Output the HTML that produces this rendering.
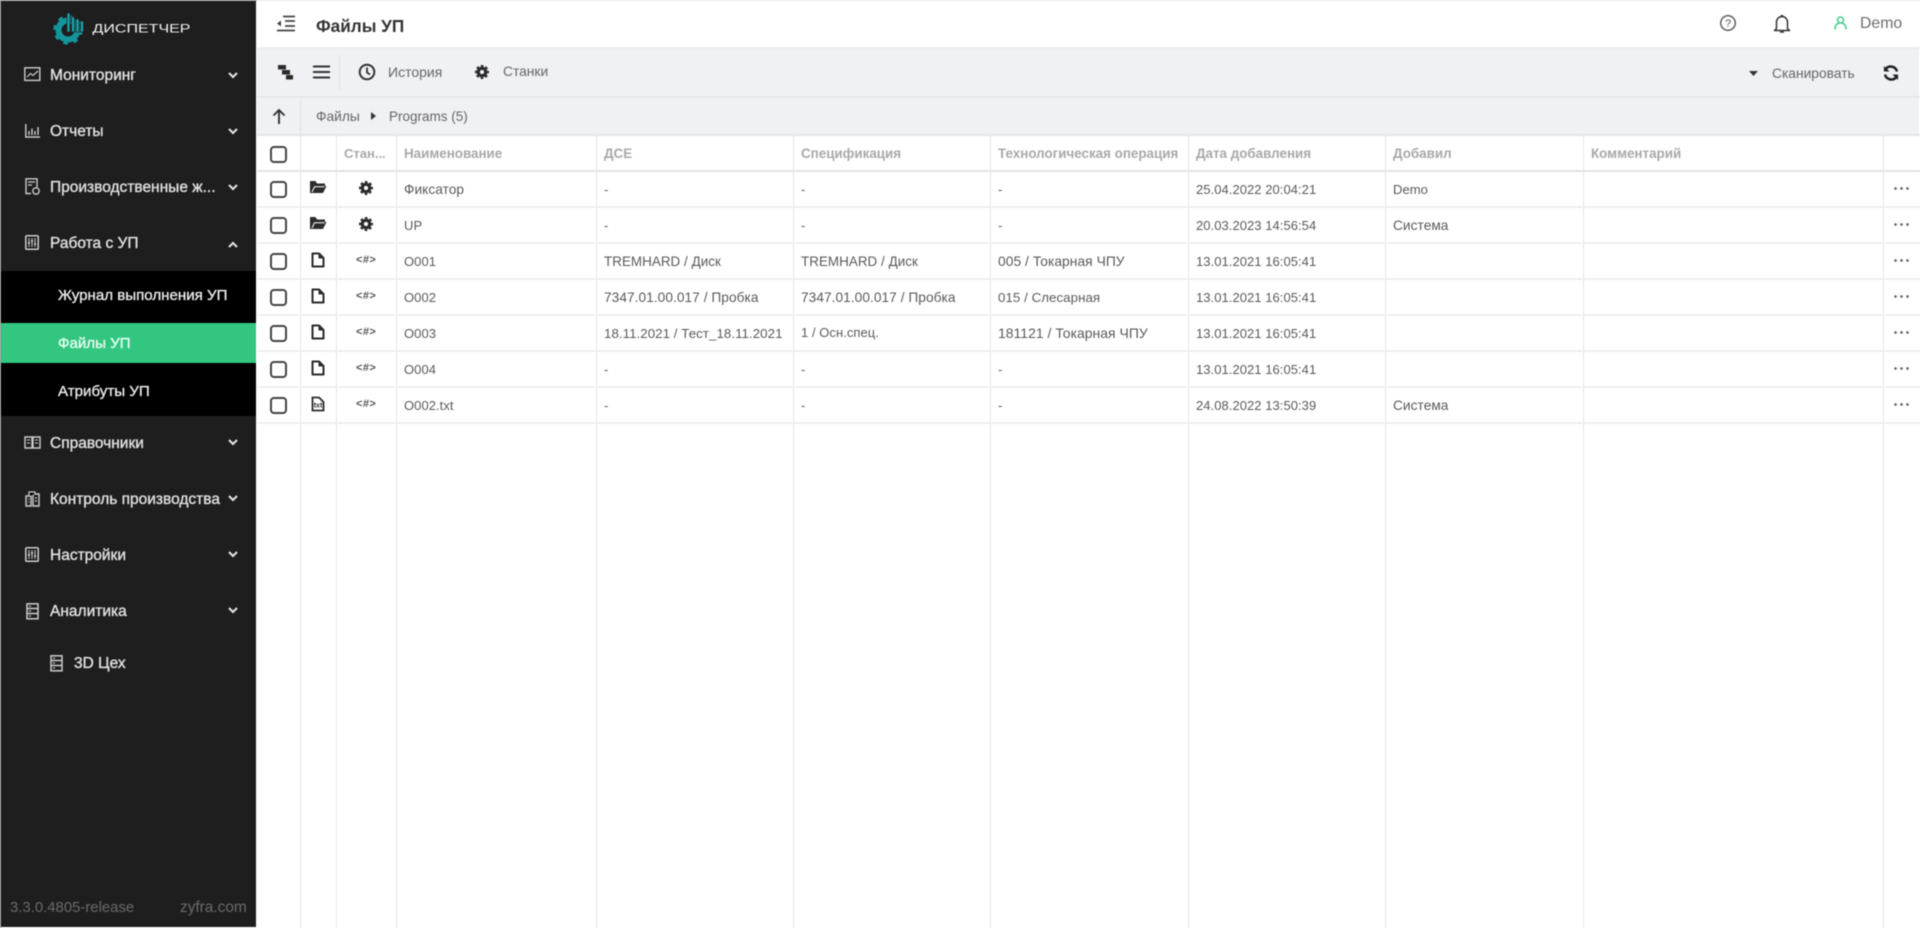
<!DOCTYPE html>
<html lang="ru"><head><meta charset="utf-8"><title>Файлы УП</title>
<style>
html,body{margin:0;padding:0;width:1920px;height:928px;overflow:hidden;background:#fff}
#r{position:relative;width:1920px;height:928px;overflow:hidden;font-family:"Liberation Sans",sans-serif;filter:blur(.4px)}
#r div,#r span,#r svg{position:absolute}
.t{white-space:nowrap;line-height:20px;height:20px}
.m{left:50px;font-size:15.5px;color:#e2e2e2;-webkit-text-stroke:.35px #e2e2e2}
.s{left:58px;font-size:15.1px;color:#e8e8e8;-webkit-text-stroke:.35px #e8e8e8}
.h{top:144px;font-size:13.4px;font-weight:700;color:#a8a8a8}
.c{font-size:13px;color:#5a5a5a;letter-spacing:.05px}
.x{font-size:13.7px}
.b{font-size:14px;color:#666}
.v{left:0;width:1px;top:135px;height:793px;background:#e4e5e8}
.l{left:257px;width:1663px;height:2px;background:#eeeff1}
.cb{left:270px;width:13px;height:13px;border:2px solid #444;border-radius:4px}
.ar{font-size:11px;font-weight:700;color:#555;left:356px;width:20px;text-align:center;letter-spacing:.4px}
.dot{left:1894px;width:16px;height:3px;background:radial-gradient(circle at 1.5px 1.5px,#666 1.2px,transparent 1.5px) 0 0/6px 3px}
</style></head><body><div id="r">
<svg width="0" height="0" style="left:0;top:0"><defs>
<g id="gear"><circle cx="8" cy="8" r="3.7" fill="none" stroke="#2b2b2b" stroke-width="3.2"/><circle cx="8" cy="8" r="5.9" fill="none" stroke="#2b2b2b" stroke-width="2.2" stroke-dasharray="2.7 1.93" stroke-dashoffset="1.35"/></g>
<g id="doc"><path d="M2.5 1.5H9L13.5 6V14.5H2.5Z" fill="none" stroke="#2b2b2b" stroke-width="2" stroke-linejoin="round"/><path d="M8.5 1.5V6.5H13.5Z" fill="#2b2b2b"/></g>
<g id="fold"><path d="M1 2V14H14L17.5 7H16V4.5H8L6.5 2Z" fill="#2b2b2b"/><path d="M3 13L5.5 7.8H15.5" fill="none" stroke="#fff" stroke-width="1"/></g>
<g id="down"><path d="M1 1L5 5L9 1" fill="none" stroke="#ddd" stroke-width="2.2"/></g>
<g id="sl"><rect x=".8" y=".8" width="12.4" height="13.4" fill="none" stroke="#ccc" stroke-width="1.5" rx="1"/><path d="M4 3V12M7 3V12M10 3V12" stroke="#ccc" stroke-width="1"/><path d="M2.8 8H5.2M5.8 6H8.2M8.8 9H11.2" stroke="#ccc" stroke-width="1.3"/></g>
<g id="tb"><rect x="1" y=".8" width="11" height="15" fill="none" stroke="#ccc" stroke-width="1.5"/><path d="M1 5.5H12M1 10.5H12" stroke="#ccc" stroke-width="1.5"/><path d="M3 3.2H5M3 8H5M3 13H5" stroke="#ccc" stroke-width="1.2"/></g>
</defs></svg>

<!-- sidebar -->
<div style="left:0;top:0;width:257px;height:1px;background:#999"></div>
<div style="left:257px;top:0;width:1663px;height:1px;background:#e8e8e8"></div>
<div style="left:1px;top:1px;width:255px;height:926px;background:#1e1e1e"></div>
<div style="left:0;top:0;width:1px;height:928px;background:#888"></div>
<div style="left:1px;top:271px;width:255px;height:145px;background:#000"></div>
<div style="left:1px;top:323px;width:255px;height:40px;background:#33c680"></div>

<svg style="left:53px;top:12px" width="34" height="34" viewBox="0 0 34 34">
<circle cx="15" cy="18" r="9.5" fill="none" stroke="#13959b" stroke-width="6"/>
<circle cx="15" cy="18" r="13" fill="none" stroke="#13959b" stroke-width="3.4" stroke-dasharray="4.5 5.7"/>
<path d="M14 1h3v19h-3zM18.5 5h3v15h-3zM23 7h3v13h-3zM27.5 9h3v11h-3z" fill="#1aa6ad" stroke="#1e1e1e" stroke-width=".8"/></svg>
<svg style="left:90px;top:18px" width="104" height="20"><text x="2.5" y="14.5" font-family="Liberation Sans" font-size="11.5" fill="#f2f2f2" textLength="98" lengthAdjust="spacingAndGlyphs">ДИСПЕТЧЕР</text></svg>

<div class="t m" style="top:66px">Мониторинг</div>
<div class="t m" style="top:122px">Отчеты</div>
<div class="t m" style="top:178px">Производственные ж...</div>
<div class="t m" style="top:234px">Работа с УП</div>
<div class="t s" style="top:286px">Журнал выполнения УП</div>
<div class="t s" style="top:334px;color:#e6fff2;-webkit-text-stroke-color:#e6fff2">Файлы УП</div>
<div class="t s" style="top:382px">Атрибуты УП</div>
<div class="t m" style="top:434px">Справочники</div>
<div class="t m" style="top:490px">Контроль производства</div>
<div class="t m" style="top:546px">Настройки</div>
<div class="t m" style="top:602px">Аналитика</div>
<div class="t m" style="left:74px;top:654px">3D Цех</div>
<div class="t" style="left:10px;top:898px;font-size:14.9px;color:#6a6a6a">3.3.0.4805-release</div>
<div class="t" style="left:180px;top:898px;font-size:15.4px;color:#6a6a6a">zyfra.com</div>

<svg style="left:228px;top:72px" width="10" height="7"><use href="#down"/></svg>
<svg style="left:228px;top:128px" width="10" height="7"><use href="#down"/></svg>
<svg style="left:228px;top:184px" width="10" height="7"><use href="#down"/></svg>
<svg style="left:228px;top:241px" width="10" height="7"><path d="M1 6L5 2L9 6" fill="none" stroke="#ddd" stroke-width="2.2"/></svg>
<svg style="left:228px;top:439px" width="10" height="7"><use href="#down"/></svg>
<svg style="left:228px;top:495px" width="10" height="7"><use href="#down"/></svg>
<svg style="left:228px;top:551px" width="10" height="7"><use href="#down"/></svg>
<svg style="left:228px;top:607px" width="10" height="7"><use href="#down"/></svg>

<svg style="left:24px;top:67px" width="17" height="15"><rect x=".8" y=".8" width="15" height="12.6" fill="none" stroke="#ccc" stroke-width="1.4"/><path d="M3 10L6.5 6.5L9 8.5L14 4" fill="none" stroke="#ccc" stroke-width="1.2"/></svg>
<svg style="left:25px;top:124px" width="15" height="14"><path d="M.8 0V13H15" fill="none" stroke="#ccc" stroke-width="1.4"/><path d="M4 11V7M7 11V4.5M10 11V7M13 11V3" stroke="#ccc" stroke-width="1.4"/></svg>
<svg style="left:25px;top:178px" width="15" height="17"><path d="M6 15.5H1V.8H12V9" fill="none" stroke="#ccc" stroke-width="1.4"/><path d="M3 4H10M3 7H7" stroke="#ccc" stroke-width="1.3"/><circle cx="11" cy="13" r="3.2" fill="none" stroke="#ccc" stroke-width="1.3"/></svg>
<svg style="left:25px;top:235px" width="15" height="16"><use href="#sl"/></svg>
<svg style="left:24px;top:436px" width="17" height="13"><path d="M1 1H8V12H1ZM9 1H16V12H9Z" fill="none" stroke="#ccc" stroke-width="1.4"/><path d="M3 4H6M3 7H6M11 4H14M11 7H14" stroke="#ccc" stroke-width="1.1"/></svg>
<svg style="left:25px;top:491px" width="15" height="16"><path d="M1 5H6V15H1ZM8 3H14V15H8Z" fill="none" stroke="#ccc" stroke-width="1.4"/><path d="M4 5V1H10V3M3 8H4M3 11H4M10 7H12M10 10H12" stroke="#ccc" stroke-width="1.3"/></svg>
<svg style="left:25px;top:547px" width="15" height="16"><use href="#sl"/></svg>
<svg style="left:26px;top:603px" width="13" height="17"><use href="#tb"/></svg>
<svg style="left:50px;top:655px" width="13" height="17"><use href="#tb"/></svg>

<!-- top header -->
<svg style="left:276px;top:15px" width="19" height="17"><path d="M7 1.5H19M9 6H19M9 11H19M1 15.5H19" stroke="#444" stroke-width="1.8" fill="none"/><path d="M1 8.5L5 5.5V11.5Z" fill="#444"/></svg>
<div class="t" style="left:316px;top:16px;font-size:17.2px;font-weight:700;color:#333">Файлы УП</div>
<svg style="left:1719px;top:14px" width="18" height="18"><circle cx="9" cy="9" r="7.3" fill="none" stroke="#555" stroke-width="1.4"/><text x="9" y="13" text-anchor="middle" font-family="Liberation Sans" font-size="11" fill="#555">?</text></svg>
<svg style="left:1773px;top:14px" width="18" height="20"><path d="M3.5 14.5V8a5.5 5.5 0 0 1 11 0V14.5L16.5 16.5H1.5Z" fill="none" stroke="#333" stroke-width="1.5" stroke-linejoin="round"/><circle cx="9" cy="2" r="1.3" fill="#333"/><path d="M7 18H11" stroke="#333" stroke-width="1.5"/></svg>
<svg style="left:1834px;top:16px" width="13" height="14"><circle cx="6.5" cy="4" r="3" fill="none" stroke="#4ccf8e" stroke-width="1.6"/><path d="M1 13.5C1 9 3 7 6.5 7S12 9 12 13.5" fill="none" stroke="#4ccf8e" stroke-width="1.6"/></svg>
<div class="t" style="left:1860px;top:14px;font-size:15.8px;color:#6e6e6e">Demo</div>

<!-- toolbars -->
<div style="left:257px;top:48px;width:1662px;height:87px;background:#f0f1f5"></div>
<div style="left:257px;top:47px;width:1663px;height:2px;background:#eceef1"></div>
<div style="left:257px;top:96px;width:1663px;height:2px;background:#e6e7ea"></div>
<div style="left:257px;top:134px;width:1663px;height:2px;background:#e4e5e8"></div>
<div style="left:339px;top:55px;width:1px;height:36px;background:#e0e1e5"></div>
<div style="left:300px;top:99px;width:1px;height:36px;background:#e0e1e5"></div>

<svg style="left:278px;top:65px" width="16" height="15"><path d="M0 0H8V4.5H0ZM4 5H12V9.5H4ZM8 10H15V14.5H8Z" fill="#2b2b2b"/></svg>
<svg style="left:313px;top:65px" width="17" height="14"><path d="M0 1.5H17M0 7H17M0 12.5H17" stroke="#333" stroke-width="2"/></svg>
<svg style="left:358px;top:63px" width="18" height="18"><circle cx="9" cy="9" r="7.3" fill="none" stroke="#333" stroke-width="2"/><path d="M9 4.5V9.5L12 11.5" fill="none" stroke="#333" stroke-width="1.8"/></svg>
<div class="t b" style="left:388px;top:62px">История</div>
<svg style="left:474px;top:64px" width="16" height="16"><use href="#gear"/></svg>
<div class="t b" style="left:503px;top:62px;font-size:13.8px">Станки</div>
<svg style="left:1749px;top:71px" width="9" height="5"><path d="M0 0H9L4.5 5Z" fill="#333"/></svg>
<div class="t b" style="left:1772px;top:64px;font-size:13.8px">Сканировать</div>
<svg style="left:1883px;top:65px" width="16" height="16"><path d="M14 6.5A6.5 6.500 0 0 0 3 3.500L1.500 5" fill="none" stroke="#222" stroke-width="2.500"/><path d="M2 9.500A6.500 6.500 0 0 0 13 12.500L14.500 11" fill="none" stroke="#222" stroke-width="2.500"/><path d="M1 1V6.500H6.500ZM15 15V9.500H9.500Z" fill="#222"/></svg>

<svg style="left:272px;top:108px" width="14" height="16"><path d="M7 16V2M1.500 7.500L7 2L12.500 7.500" fill="none" stroke="#333" stroke-width="1.900"/></svg>
<div class="t b" style="left:316px;top:107px;font-size:13.8px">Файлы</div>
<svg style="left:371px;top:112px" width="5" height="8"><path d="M0 0L5 4L0 8Z" fill="#333"/></svg>
<div class="t b" style="left:389px;top:107px;font-size:13.5px">Programs (5)</div>

<!-- table lines -->
<div class="v" style="left:300px"></div><div class="v" style="left:336px"></div><div class="v" style="left:396px"></div>
<div class="v" style="left:596px"></div><div class="v" style="left:793px"></div><div class="v" style="left:990px"></div>
<div class="v" style="left:1188px"></div><div class="v" style="left:1385px"></div><div class="v" style="left:1583px"></div><div class="v" style="left:1883px"></div>
<div class="l" style="top:170px;background:#e2e3e6"></div>
<div class="l" style="top:206px"></div><div class="l" style="top:242px"></div><div class="l" style="top:278px"></div>
<div class="l" style="top:314px"></div><div class="l" style="top:350px"></div><div class="l" style="top:386px"></div><div class="l" style="top:422px"></div>

<!-- header row -->
<div class="cb" style="top:146px"></div>
<div class="t h" style="left:344px;font-size:13px">Стан...</div>
<div class="t h" style="left:404px">Наименование</div>
<div class="t h" style="left:604px">ДСЕ</div>
<div class="t h" style="left:801px">Спецификация</div>
<div class="t h" style="left:998px">Технологическая операция</div>
<div class="t h" style="left:1196px">Дата добавления</div>
<div class="t h" style="left:1393px">Добавил</div>
<div class="t h" style="left:1591px">Комментарий</div>

<!-- row 1 -->
<div class="cb" style="top:181px"></div>
<svg style="left:309px;top:179px" width="18" height="15"><use href="#fold"/></svg>
<svg style="left:358px;top:180px" width="16" height="16"><use href="#gear"/></svg>
<div class="t c x" style="left:404px;top:180px">Фиксатор</div>
<div class="t c" style="left:604px;top:180px">-</div><div class="t c" style="left:801px;top:180px">-</div><div class="t c" style="left:998px;top:180px">-</div>
<div class="t c" style="left:1196px;top:180px">25.04.2022 20:04:21</div>
<div class="t c" style="left:1393px;top:180px">Demo</div>
<div class="dot" style="top:187px"></div>
<!-- row 2 -->
<div class="cb" style="top:217px"></div>
<svg style="left:309px;top:215px" width="18" height="15"><use href="#fold"/></svg>
<svg style="left:358px;top:216px" width="16" height="16"><use href="#gear"/></svg>
<div class="t c" style="left:404px;top:216px">UP</div>
<div class="t c" style="left:604px;top:216px">-</div><div class="t c" style="left:801px;top:216px">-</div><div class="t c" style="left:998px;top:216px">-</div>
<div class="t c" style="left:1196px;top:216px">20.03.2023 14:56:54</div>
<div class="t c x" style="left:1393px;top:216px">Система</div>
<div class="dot" style="top:223px"></div>
<!-- row 3 -->
<div class="cb" style="top:253px"></div>
<svg style="left:310px;top:252px" width="16" height="16"><use href="#doc"/></svg>
<div class="t ar" style="top:250px">&lt;#&gt;</div>
<div class="t c" style="left:404px;top:252px">O001</div>
<div class="t c" style="left:604px;top:252px;font-size:13.4px">TREMHARD / Диск</div>
<div class="t c" style="left:801px;top:252px;font-size:13.4px">TREMHARD / Диск</div>
<div class="t c x" style="left:998px;top:252px;font-size:13.8px">005 / Токарная ЧПУ</div>
<div class="t c" style="left:1196px;top:252px">13.01.2021 16:05:41</div>
<div class="dot" style="top:259px"></div>
<!-- row 4 -->
<div class="cb" style="top:289px"></div>
<svg style="left:310px;top:288px" width="16" height="16"><use href="#doc"/></svg>
<div class="t ar" style="top:286px">&lt;#&gt;</div>
<div class="t c" style="left:404px;top:288px">O002</div>
<div class="t c x" style="left:604px;top:288px">7347.01.00.017 / Пробка</div>
<div class="t c x" style="left:801px;top:288px">7347.01.00.017 / Пробка</div>
<div class="t c" style="left:998px;top:288px;font-size:13.3px">015 / Слесарная</div>
<div class="t c" style="left:1196px;top:288px">13.01.2021 16:05:41</div>
<div class="dot" style="top:295px"></div>
<!-- row 5 -->
<div class="cb" style="top:325px"></div>
<svg style="left:310px;top:324px" width="16" height="16"><use href="#doc"/></svg>
<div class="t ar" style="top:322px">&lt;#&gt;</div>
<div class="t c" style="left:404px;top:324px">O003</div>
<div class="t c" style="left:604px;top:324px;font-size:13.3px">18.11.2021 / Тест_18.11.2021</div>
<div class="t c" style="left:801px;top:323px">1 / Осн.спец.</div>
<div class="t c" style="left:998px;top:323px;font-size:13.9px">181121 / Токарная ЧПУ</div>
<div class="t c" style="left:1196px;top:324px">13.01.2021 16:05:41</div>
<div class="dot" style="top:331px"></div>
<!-- row 6 -->
<div class="cb" style="top:361px"></div>
<svg style="left:310px;top:360px" width="16" height="16"><use href="#doc"/></svg>
<div class="t ar" style="top:358px">&lt;#&gt;</div>
<div class="t c" style="left:404px;top:360px">O004</div>
<div class="t c" style="left:604px;top:360px">-</div><div class="t c" style="left:801px;top:360px">-</div><div class="t c" style="left:998px;top:360px">-</div>
<div class="t c" style="left:1196px;top:360px">13.01.2021 16:05:41</div>
<div class="dot" style="top:367px"></div>
<!-- row 7 -->
<div class="cb" style="top:397px"></div>
<svg style="left:310px;top:396px" width="16" height="16"><path d="M3 1.5H9L13.5 6V14.5H2.5V1.5Z" fill="none" stroke="#2b2b2b" stroke-width="1.8"/><text x="8" y="11.5" text-anchor="middle" font-family="Liberation Sans" font-size="7" font-weight="700" fill="#2b2b2b">txt</text></svg>
<div class="t ar" style="top:394px">&lt;#&gt;</div>
<div class="t c" style="left:404px;top:396px">O002.txt</div>
<div class="t c" style="left:604px;top:396px">-</div><div class="t c" style="left:801px;top:396px">-</div><div class="t c" style="left:998px;top:396px">-</div>
<div class="t c" style="left:1196px;top:396px">24.08.2022 13:50:39</div>
<div class="t c x" style="left:1393px;top:396px">Система</div>
<div class="dot" style="top:403px"></div>
</div></body></html>
